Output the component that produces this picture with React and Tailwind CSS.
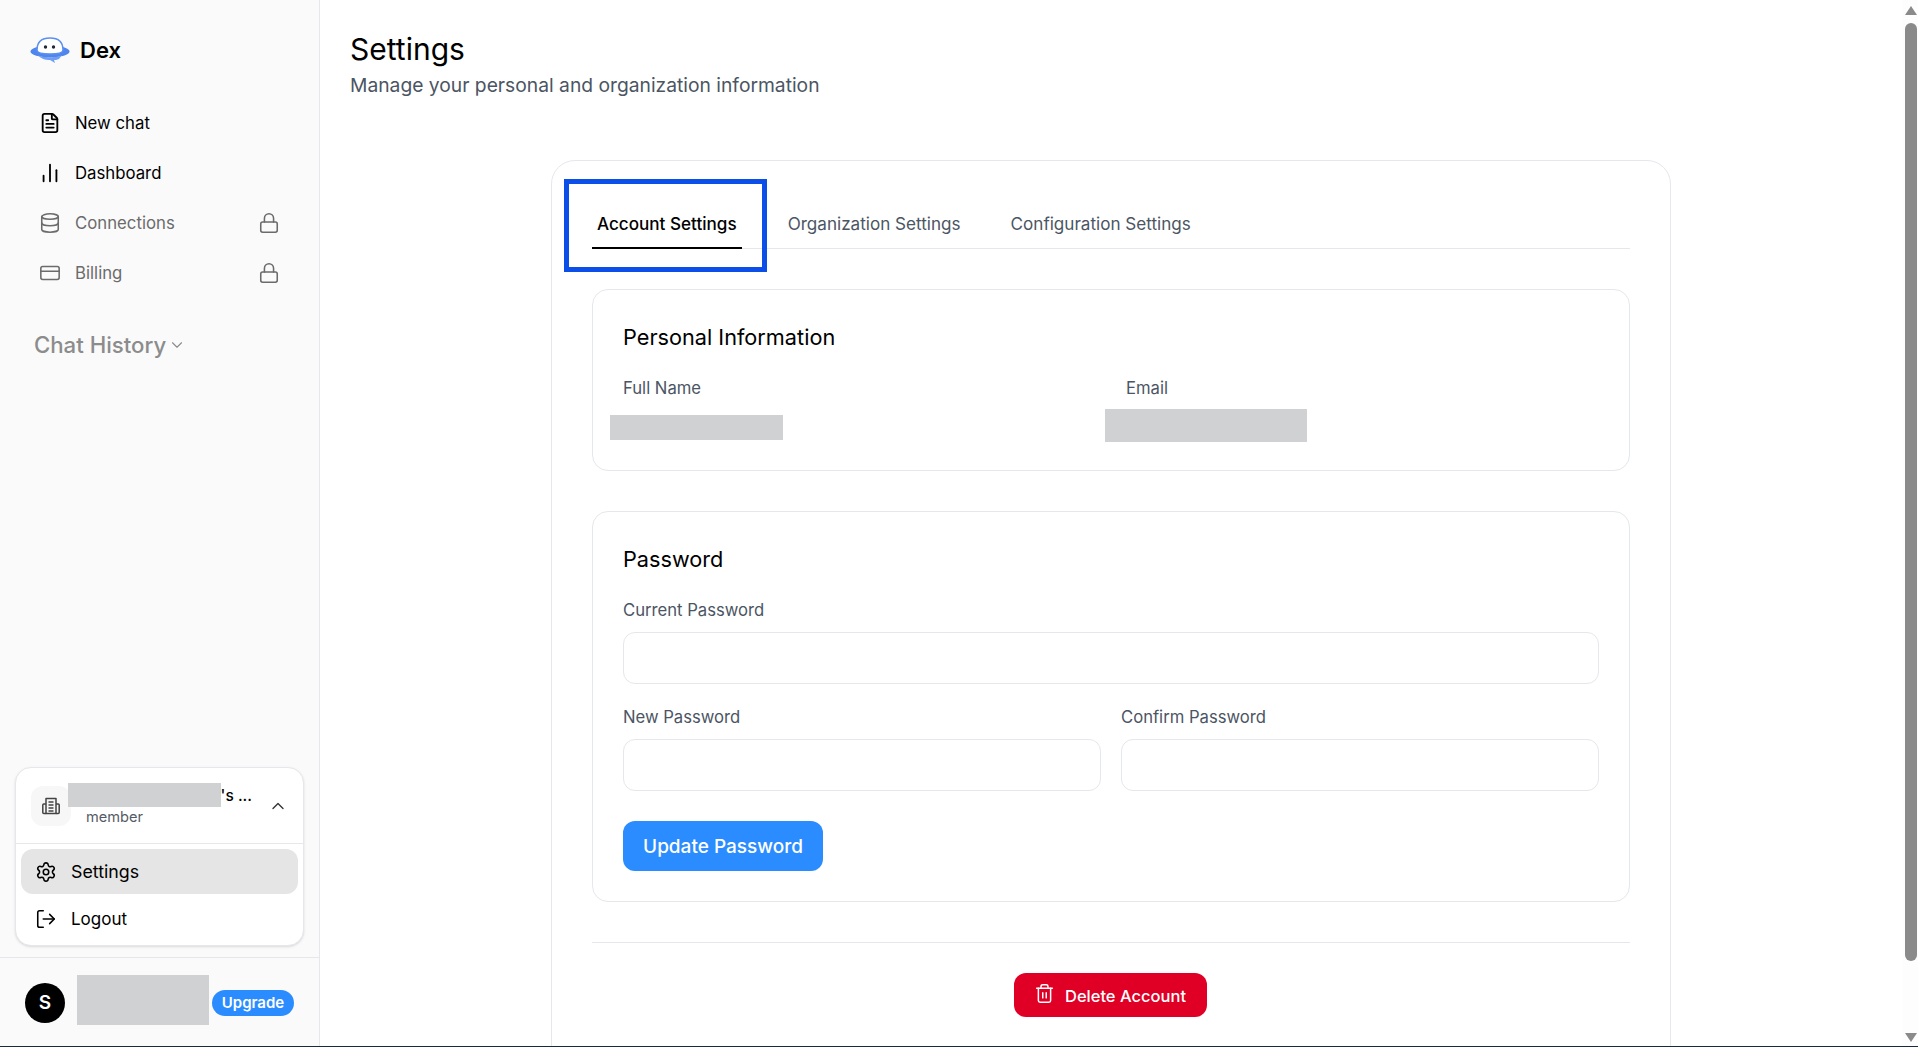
import { FileText, ChartNoAxesColumn, Database, CreditCard, Lock, ChevronDown, ChevronUp, Settings, LogOut, Trash2 } from 'lucide-react'

const navItems = [
  { label: 'New chat', icon: FileText },
  { label: 'Dashboard', icon: ChartNoAxesColumn },
  { label: 'Connections', icon: Database, locked: true },
  { label: 'Billing', icon: CreditCard, locked: true },
]

function DexLogo() {
  return (
    <svg width="40" height="26" viewBox="0 0 40 26" fill="none">
      <ellipse cx="20" cy="14.5" rx="19.5" ry="6" fill="#4f86ee" />
      <path d="M7 13C7 5 11 1 20 1s13 4 13 12c0 3-6 4-13 4S7 16 7 13Z" fill="#fff" stroke="#5b8ff0" strokeWidth="1.5" />
      <path d="M8 18c4 3 20 3 24 0l-3 4c-2 1-4 1-5 1l1 3-5-3c-5 0-9-1-12-5Z" fill="#6f9ff5" />
      <circle cx="15.5" cy="10" r="1.7" fill="#1f2937" />
      <circle cx="23.5" cy="10" r="1.7" fill="#1f2937" />
    </svg>
  )
}

function OrgIcon() {
  return (
    <svg width="20" height="20" viewBox="0 0 20 20" fill="none" stroke="currentColor" strokeWidth="1.5" strokeLinejoin="round">
      <path d="M5 2.500h10v15H5z" />
      <path d="M5 8H2.800a1 1 0 0 0-1 1v7.500a1 1 0 0 0 1 1H5M15 8h2.200a1 1 0 0 1 1 1v7.500a1 1 0 0 1-1 1H15" />
      <path d="M7.500 6h5M7.500 9h5M7.500 12h5M7.500 15h5" />
    </svg>
  )
}

function Sidebar() {
  return (
    <div className="w-[320px] shrink-0 h-full flex flex-col bg-[#fafafa] border-r border-[#e5e7eb]">
      <div className="flex gap-[10px] pl-[30px] pt-[37px] h-[98px] items-start">
        <DexLogo />
        <span className="-mt-[1px] text-[22px] leading-[28px] font-semibold text-black">Dex</span>
      </div>

      <div className="px-[39px]">
        {navItems.map(item => {
          const Icon = item.icon
          return (
            <div key={item.label} className={`h-[50px] flex items-center gap-[14px] ${item.locked ? 'text-[#6b6b6b]' : 'text-black'}`}>
              <Icon size={22} strokeWidth={item.locked ? 1.7 : 2} />
              <span className="flex-1 pt-[2px] text-[16.75px]">{item.label}</span>
              {item.locked && <Lock size={22} strokeWidth={1.7} />}
            </div>
          )
        })}
      </div>

      <div className="mt-[30px] pl-[34px] flex items-center gap-[2px] text-[#8c8c8c]">
        <span className="text-[22.2px] leading-[34px] font-medium">Chat History</span>
        <ChevronDown size={18} strokeWidth={1.5} />
      </div>

      <div className="flex-1" />

      <div className="mx-[15px] mb-[11px] bg-white border border-[#e5e7eb] rounded-2xl shadow-sm">
        <div className="h-[76px] pl-[15px] pr-[15px] flex items-center border-b border-[#e5e7eb]">
          <div className="w-[40px] h-[40px] rounded-xl bg-[#f7f7f7] flex items-center justify-center text-[#444]">
            <OrgIcon />
          </div>
          <div className="relative flex-1 min-w-0 pl-[15px]">
            <div className="text-[15.5px] leading-[22px] text-right pr-[16px] font-medium text-black">a's ...</div>
            <div className="text-[14.6px] leading-[20px] text-[#555b66]">member</div>
            <div className="absolute left-[-3px] top-[-2px] w-[153px] h-[24px] bg-[#d0d1d2]" />
          </div>
          <ChevronUp size={20} strokeWidth={1.6} className="text-[#333]" />
        </div>
        <div className="px-[5px] pt-[5px] pb-[1px]">
          <div className="h-[45px] rounded-xl bg-[#e5e5e5] flex items-center gap-[14px] pl-[14px] text-black">
            <Settings size={22} strokeWidth={1.7} />
            <span className="pt-[2px] text-[17.8px]">Settings</span>
          </div>
          <div className="h-[50px] flex items-center gap-[14px] pl-[14px] text-black">
            <LogOut size={22} strokeWidth={1.7} />
            <span className="pt-[2px] text-[17px]">Logout</span>
          </div>
        </div>
      </div>

      <div className="h-[89px] border-t border-[#e5e7eb] flex items-center pl-[25px]">
        <div className="mt-[2px] w-[40px] h-[40px] rounded-full bg-black text-white flex items-center justify-center text-[19px] font-semibold">S</div>
        <div className="mb-[4px] w-[132px] h-[50px] bg-[#d0d1d2] ml-[12px]" />
        <div className="mt-[2px] ml-[3px] w-[82px] h-[26px] rounded-full bg-[#2b8cff] text-white text-[15px] font-semibold flex items-center justify-center">Upgrade</div>
      </div>
    </div>
  )
}

function Field({ label }) {
  return (
    <div>
      <label className="block text-[16.65px] leading-[24px] text-[#4b5563]">{label}</label>
      <input type="password" className="mt-[10px] block w-full h-[52px] rounded-xl border border-[#e5e7eb] bg-white" />
    </div>
  )
}

function AccountCard() {
  return (
    <div className="w-[1120px] mx-auto mt-[61px] px-[40px] pt-[51px] pb-[60px] rounded-3xl border border-[#e5e7eb] bg-white">
      <div className="relative flex gap-[40px] border-b border-[#e5e7eb] h-[37px]">
        <div className="mr-[1px] px-[5px] h-[37px] border-b-2 border-black text-[17.1px] leading-[24px] font-medium text-black">Account Settings</div>
        <div className="px-[5px] text-[17.1px] leading-[24px] text-[#4b5563]">Organization Settings</div>
        <div className="px-[5px] text-[17.1px] leading-[24px] text-[#4b5563]">Configuration Settings</div>
        <div className="absolute left-[-28px] top-[-33px] w-[203px] h-[93px] border-[5px] border-[#0c4fe8]" />
      </div>

      <div className="mt-[40px] h-[182px] rounded-2xl border border-[#e5e7eb] px-[30px] pt-[33px]">
        <h2 className="text-[21.7px] leading-[28px] font-normal text-black">Personal Information</h2>
        <div className="mt-[25px] grid grid-cols-2 gap-[20px]">
          <div>
            <div className="text-[16.65px] leading-[24px] text-[#4b5563]">Full Name</div>
            <div className="mt-[15px] -ml-[13px] w-[173px] h-[25px] bg-[#d0d1d2]" />
          </div>
          <div>
            <div className="ml-[5px] text-[16.65px] leading-[24px] text-[#4b5563]">Email</div>
            <div className="mt-[9px] -ml-[16px] w-[202px] h-[33px] bg-[#d0d1d2]" />
          </div>
        </div>
      </div>

      <div className="mt-[40px] rounded-2xl border border-[#e5e7eb] px-[30px] pt-[33px] pb-[30px]">
        <h2 className="text-[21.7px] leading-[28px] font-normal text-black">Password</h2>
        <div className="mt-[25px]">
          <Field label="Current Password" />
        </div>
        <div className="mt-[21px] grid grid-cols-2 gap-[20px]">
          <Field label="New Password" />
          <Field label="Confirm Password" />
        </div>
        <button className="mt-[30px] w-[200px] h-[50px] pt-[2px] rounded-xl bg-[#2b8cff] text-white text-[19px] font-medium">Update Password</button>
      </div>

      <div className="mt-[40px] border-t border-[#e5e7eb] pt-[30px] flex justify-center">
        <button className="mr-[2px] w-[193px] h-[44px] pt-[2px] rounded-xl bg-[#e00025] text-white flex items-center justify-center gap-[10px]">
          <Trash2 size={21} strokeWidth={1.7} className="-mt-[5px]" />
          <span className="text-[16.5px] font-medium">Delete Account</span>
        </button>
      </div>
    </div>
  )
}

function Scrollbar() {
  return (
    <div className="w-[16px] shrink-0 h-full bg-[#fdfdfd] flex flex-col items-end pr-[1px] pt-[6px]">
      <div className="w-0 h-0 border-x-[6px] border-x-transparent border-b-[9px] border-b-[#8a8a8a]" />
      <div className="mt-[8px] w-[12px] h-[938px] rounded-full bg-[#8a8a8a]" />
      <div className="mt-[72px] w-0 h-0 border-x-[6px] border-x-transparent border-t-[9px] border-t-[#8a8a8a]" />
    </div>
  )
}

export default function App() {
  return (
    <div className="h-screen flex flex-col overflow-hidden bg-white font-[Inter,sans-serif]">
      <div className="flex-1 min-h-0 flex">
        <Sidebar />
        <div className="flex-1 min-w-0 overflow-hidden px-[30px] pt-[31px]">
          <h1 className="text-[30px] leading-[36px] font-normal text-black">Settings</h1>
          <p className="mt-[4px] text-[19.25px] leading-[28px] text-[#4b5563]">Manage your personal and organization information</p>
          <AccountCard />
        </div>
        <Scrollbar />
      </div>
      <div className="h-px bg-[#1b2a3a]" />
    </div>
  )
}
